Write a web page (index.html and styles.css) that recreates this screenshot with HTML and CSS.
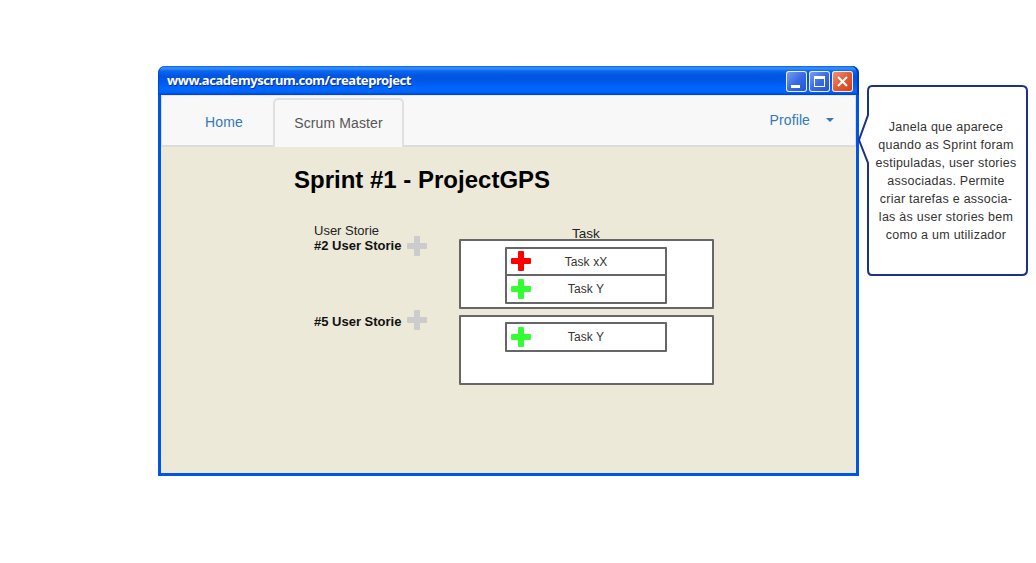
FILE: index.html
```
<!DOCTYPE html>
<html lang="pt">
<head>
<meta charset="utf-8">
<title>Academy Scrum</title>
<link rel="stylesheet" href="styles.css">
</head>
<body>
<svg class="defs" width="0" height="0">
  <symbol id="plus" viewBox="0 0 20 20"><path d="M8 0h4q1 0 1 1v6h6q1 0 1 1v4q0 1-1 1h-6v6q0 1-1 1H8q-1 0-1-1v-6H1q-1 0-1-1V8q0-1 1-1h6V1q0-1 1-1z" fill="currentColor"/></symbol>
</svg>
<main class="stage">
  <section class="window">
    <header class="titlebar">
      <span class="url">www.academyscrum.com/createproject</span>
      <div class="controls">
        <span class="control"><svg viewBox="0 0 21 21"><path d="M5 14h9v3H5z" fill="#fff"/></svg></span>
        <span class="control"><svg viewBox="0 0 21 21"><path d="M5 5h11v11H5zM6 8v7h9V8z" fill="#fff" fill-rule="evenodd"/></svg></span>
        <span class="control close"><svg viewBox="0 0 21 21"><path d="M6 6l9 9M15 6l-9 9" stroke="#fff" stroke-width="2.1" fill="none"/></svg></span>
      </div>
    </header>
    <div class="body">
      <nav class="nav">
        <a class="home">Home</a>
        <a class="tab">Scrum Master</a>
        <a class="profile">Profile <i class="caret"></i></a>
      </nav>
      <div class="content">
        <h1 class="heading">Sprint #1 - ProjectGPS</h1>
        <div class="board">
          <div class="stories">
            <span class="label">User Storie</span>
            <div class="story first"><b>#2 User Storie</b><svg class="plus"><use href="#plus"/></svg></div>
            <div class="story second"><b>#5 User Storie</b><svg class="plus"><use href="#plus"/></svg></div>
          </div>
          <div class="tasks">
            <span class="task-label">Task</span>
            <div class="box">
              <div class="task top"><svg class="plus red"><use href="#plus"/></svg><span>Task xX</span></div>
              <div class="task joined"><svg class="plus green"><use href="#plus"/></svg><span>Task Y</span></div>
            </div>
            <div class="box lower">
              <div class="task"><svg class="plus green"><use href="#plus"/></svg><span>Task Y</span></div>
            </div>
          </div>
        </div>
      </div>
    </div>
  </section>
  <aside class="callout">
    <svg class="bubble" viewBox="0 0 172 194"><path d="M15 2H165Q170 2 170 7V186Q170 191 165 191H15Q11 191 11 186V79L2 56L11 31V7Q11 2 15 2z" fill="#fff" stroke="#1c3287" stroke-width="2"/></svg>
    <p class="note">Janela que aparece<br>quando as Sprint foram<br>estipuladas, user stories<br>associadas. Permite<br>criar tarefas e associa-<br>las às user stories bem<br>como a um utilizador</p>
  </aside>
</main>
</body>
</html>
```
FILE: styles.css
```
* { box-sizing: border-box; }
body {
  margin: 0;
  background: #fff;
  font-family: "Liberation Sans", Arial, sans-serif;
  overflow: hidden;
}
.defs { display: block; }
.stage {
  display: flex;
  align-items: flex-start;
  height: 563px;
  padding: 66px 0 0 158px;
}
.window {
  flex: none;
  width: 701px;
  height: 410px;
}
.titlebar {
  display: flex;
  align-items: center;
  justify-content: space-between;
  height: 29px;
  padding: 1px 6px 0 9px;
  border-radius: 7px 7px 0 0;
  background: linear-gradient(#0a5fe0 0, #3a94ff 7%, #0a66f0 18%, #0054e0 35%, #0059ea 55%, #0068ff 80%, #0065fa 90%, #0040c8 100%);
  box-shadow: inset 1px 0 #0046d5, inset -2px 0 #0038b8;
}
.url {
  padding-bottom: 2px;
  color: #fff;
  font: bold 13px/18px "Noto Sans", sans-serif;
  letter-spacing: -0.43px;
  text-shadow: 1px 1px #0f2f8f;
  white-space: nowrap;
}
.controls { display: flex; gap: 2px; }
.control {
  width: 21px;
  height: 21px;
  border-radius: 3px;
  background: linear-gradient(135deg, #7fa3f2, #3a6be4 50%, #1e52d4);
  box-shadow: inset 0 0 0 1px #e8eefc;
}
.control svg { display: block; width: 21px; height: 21px; }
.control.close { background: linear-gradient(135deg, #f0997c, #e25b35 50%, #d43c0c); }
.body {
  height: 381px;
  border: 3px solid #0055e5;
  border-top: 0;
  background: #ece9d8;
}
.nav {
  display: flex;
  align-items: flex-start;
  height: 52px;
  border: 2px solid #dcdcdc;
  border-width: 1px 1px 2px;
  border-top-color: #e8e8e8;
  border-radius: 4px 4px 0 0;
  background: #f8f8f8;
  color: #337ab7;
  font-size: 14px;
  line-height: 16px;
}
.home { width: 111px; padding: 18px 0 0 43px; letter-spacing: 0.15px; }
.tab {
  width: 131px;
  height: 49px;
  margin-top: 2px;
  padding-top: 15px;
  border: 2px solid #e0e0e0;
  border-bottom: 0;
  border-radius: 5px 5px 0 0;
  background: #f8f8f8;
  color: #555;
  text-align: center;
  letter-spacing: 0.12px;
}
.profile {
  display: flex;
  align-items: center;
  gap: 16px;
  margin-left: auto;
  padding: 16px 21px 0 0;
  letter-spacing: 0.1px;
}
.caret {
  border: 4px solid transparent;
  border-top-color: #337ab7;
  border-bottom: 0;
}
.content { padding-left: 133px; }
.heading {
  margin: 0;
  padding-top: 19px;
  font-size: 24px;
  line-height: 28px;
  color: #000;
}
.board { display: flex; padding-left: 20px; }
.stories {
  width: 145px;
  padding-top: 29px;
  font-size: 13px;
  line-height: 15px;
  color: #222;
}
.label { display: block; height: 13px; }
.story { display: flex; align-items: center; gap: 6px; height: 20px; color: #111; }
.story b { white-space: nowrap; width: 87px; }
.first b { padding-bottom: 2px; }
.story.second { margin-top: 54px; }
.second b { padding-top: 3px; }
.plus { display: block; flex: none; width: 20px; height: 20px; color: #ccc; }
.plus.red { color: #f00; }
.plus.green { color: #3f3; }
.tasks { width: 255px; padding-top: 32px; }
.task-label {
  display: block;
  height: 13px;
  padding-right: 1px;
  color: #222;
  font-size: 13.5px;
  line-height: 16px;
  text-align: center;
}
.box {
  height: 70px;
  padding: 6px 44px;
  border: 2px solid #666;
  border-radius: 1px;
  background: #fff;
}
.box.lower { margin-top: 6px; padding-top: 5px; }
.task {
  display: flex;
  align-items: center;
  width: 162px;
  height: 30px;
  padding: 0 4px;
  border: 2px solid #666;
  border-radius: 1px;
  color: #333;
  font-size: 12px;
  line-height: 14px;
}
.task span { width: 110px; text-align: center; letter-spacing: 0.1px; }
.task.top { height: 29px; align-items: flex-start; padding-top: 2px; }
.top span { padding-top: 4px; }
.task.joined { margin-top: -2px; }
.callout {
  position: relative;
  flex: none;
  width: 172px;
  height: 194px;
  margin: 18px 0 0 -2.5px;
  padding: 34px 4px 0 11px;
}
.bubble {
  position: absolute;
  inset: 0;
  width: 172px;
  height: 194px;
}
.note {
  position: relative;
  margin: 0;
  color: #333;
  font-size: 12.5px;
  line-height: 18px;
  letter-spacing: 0.25px;
  text-align: center;
  white-space: nowrap;
}
```
